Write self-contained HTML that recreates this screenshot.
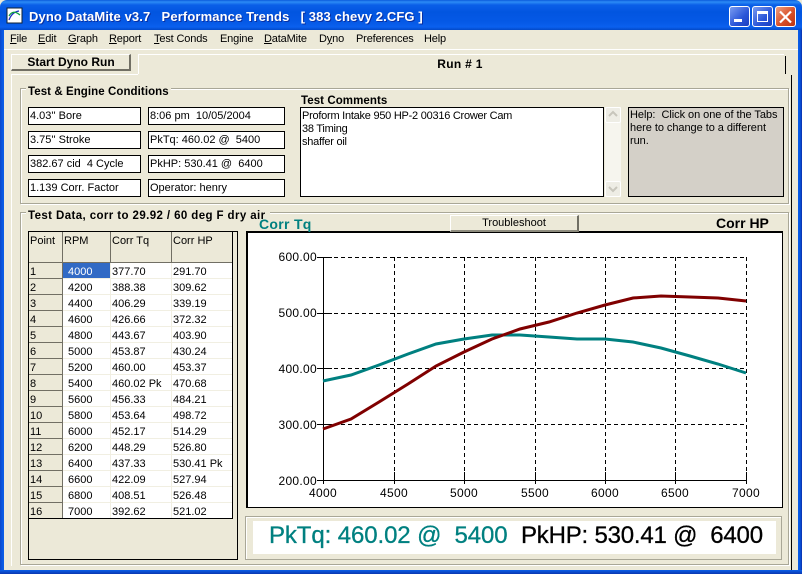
<!DOCTYPE html>
<html><head><meta charset="utf-8"><style>
html,body{margin:0;padding:0;background:#ECE9D8}
#w{position:relative;width:802px;height:574px;overflow:hidden;background:#ECE9D8;font-family:"Liberation Sans",sans-serif;font-size:11px;color:#000}
#w div{position:absolute;box-sizing:border-box;white-space:pre}
.t{line-height:14px}
.box{background:#fff;border:1px solid #000;padding:1px 0 0 1px;line-height:14px;font-size:11px}
.b{font-weight:bold;letter-spacing:.07px;line-height:14px;font-size:11.5px}
.m{top:32px;line-height:15px;font-size:11px;letter-spacing:-.15px}
u{text-decoration:underline}
.g{border:1px solid #A9A797;box-shadow:inset 1px 1px 0 #fff,1px 1px 0 #fff}
svg{position:absolute;left:0;top:0}
svg text{font-family:"Liberation Sans",sans-serif}
</style></head><body><div id="w">
<div style="left:0;top:0;width:802px;height:30px;background:linear-gradient(#0A5BDB 0,#2C8BF5 2px,#0A5FE8 5px,#0255E0 12px,#0559E6 22px,#0A60EE 27px,#0349C8 30px);border-radius:7px 7px 0 0"></div>
<div style="left:0;top:30px;width:4px;height:544px;background:linear-gradient(90deg,#0A46C8,#0855E0 50%,#0A5FE8)"></div>
<div style="left:798px;top:30px;width:4px;height:544px;background:linear-gradient(270deg,#0A2FA8,#0855E0 50%,#0A5FE8)"></div>
<div style="left:0;top:570px;width:802px;height:4px;background:linear-gradient(#0A5FE8,#0A37B0)"></div>
<svg width="802" height="574" style="z-index:1">
<rect x="7" y="8" width="15" height="15" fill="#fff"/><rect x="7" y="8" width="15" height="15" fill="none" stroke="#123" stroke-width="1"/>
<path d="M9 20Q12 12 19 11" fill="none" stroke="#2030c0" stroke-width="1.3"/><path d="M9 16Q13 9 20 15" fill="none" stroke="#10a040" stroke-width="1.3"/>
</svg>
<div class="t" style="left:29px;top:10px;font-weight:bold;color:#fff;font-size:13px;letter-spacing:.12px;text-shadow:1px 1px 0 #0A2FA0;z-index:2">Dyno DataMite v3.7   Performance Trends   [ 383 chevy 2.CFG ]</div>
<div style="left:729px;top:6px;width:21px;height:21px;border:1px solid #fff;border-radius:3px;background:linear-gradient(135deg,#7A9CF0,#2A55D8 60%,#1B3FC0)"></div>
<div style="left:734px;top:19px;width:8px;height:3px;background:#fff"></div>
<div style="left:752px;top:6px;width:21px;height:21px;border:1px solid #fff;border-radius:3px;background:linear-gradient(135deg,#7A9CF0,#2A55D8 60%,#1B3FC0)"></div>
<div style="left:757px;top:11px;width:11px;height:11px;border:1px solid #fff;border-top:3px solid #fff"></div>
<div style="left:775px;top:6px;width:21px;height:21px;border:1px solid #fff;border-radius:3px;background:linear-gradient(135deg,#EFA080,#D8502A 55%,#BC3410)"></div>
<svg width="802" height="574" style="z-index:2"><path d="M780 11.500L791 22.500M791 11.500L780 22.500" stroke="#fff" stroke-width="2.200"/></svg>

<div class="m" style="left:10px"><u>F</u>ile</div>
<div class="m" style="left:38px"><u>E</u>dit</div>
<div class="m" style="left:68px"><u>G</u>raph</div>
<div class="m" style="left:109px"><u>R</u>eport</div>
<div class="m" style="left:154px"><u>T</u>est Conds</div>
<div class="m" style="left:220px">Engine</div>
<div class="m" style="left:264px"><u>D</u>ataMite</div>
<div class="m" style="left:319px">D<u>y</u>no</div>
<div class="m" style="left:356px">Preferences</div>
<div class="m" style="left:424px">Help</div>
<div style="left:4px;top:49px;width:794px;height:1px;background:#fff"></div>

<div style="left:138px;top:54px;width:646px;height:1px;background:#fff"></div>
<div style="left:138px;top:54px;width:1px;height:20px;background:#fff"></div>
<div style="left:11px;top:74px;width:127px;height:1px;background:#fff"></div>
<div style="left:11px;top:74px;width:1px;height:492px;background:#fff"></div>
<div style="left:785px;top:56px;width:1px;height:18px;background:#000"></div>
<div style="left:791px;top:75px;width:1px;height:495px;background:#000"></div>
<div style="left:11px;top:54px;width:120px;height:17px;background:#ECE9D8;border-top:1px solid #fff;border-left:1px solid #fff;border-right:2px solid #716F64;border-bottom:2px solid #716F64"></div>
<div class="b" style="left:11px;top:55px;width:120px;text-align:center;font-size:12px;letter-spacing:0">Start Dyno Run</div>
<div class="b" style="left:360px;top:57px;width:200px;text-align:center;font-size:12px;letter-spacing:.3px">Run # 1</div>

<div class="g" style="left:20px;top:88px;width:769px;height:116px"></div>
<div class="b" style="left:26px;top:85px;background:#ECE9D8;padding:0 2px;height:15px">Test &amp; Engine Conditions</div>
<div class="box" style="left:28px;top:107px;width:113px;height:18px">4.03'' Bore</div>
<div class="box" style="left:28px;top:131px;width:113px;height:18px">3.75'' Stroke</div>
<div class="box" style="left:28px;top:155px;width:113px;height:18px">382.67 cid  4 Cycle</div>
<div class="box" style="left:28px;top:179px;width:113px;height:18px">1.139 Corr. Factor</div>
<div class="box" style="left:148px;top:107px;width:137px;height:18px">8:06 pm  10/05/2004</div>
<div class="box" style="left:148px;top:131px;width:137px;height:18px">PkTq: 460.02 @  5400</div>
<div class="box" style="left:148px;top:155px;width:137px;height:18px">PkHP: 530.41 @  6400</div>
<div class="box" style="left:148px;top:179px;width:137px;height:18px">Operator: henry</div>
<div class="b" style="left:301px;top:94px">Test Comments</div>
<div class="box" style="left:300px;top:107px;width:304px;height:90px;line-height:13px;padding:2px 0 0 1px;letter-spacing:-.25px">Proform Intake 950 HP-2 00316 Crower Cam
38 Timing
shaffer oil</div>
<div style="left:605px;top:107px;width:16px;height:90px;background:#F6F5EE"></div>
<div style="left:605px;top:107px;width:16px;height:16px;background:#EEEDE5;border:1px solid #fff;border-radius:2px"></div>
<div style="left:605px;top:181px;width:16px;height:16px;background:#EEEDE5;border:1px solid #fff;border-radius:2px"></div>
<svg width="802" height="574" style="z-index:2"><path d="M609 116l4-4 4 4M609 187l4 4 4-4" fill="none" stroke="#C8C6BC" stroke-width="2"/></svg>
<div class="box" style="left:628px;top:107px;width:156px;height:90px;background:#D4D0C8;padding:1px 0 0 1px;line-height:13px;letter-spacing:-.05px">Help:  Click on one of the Tabs
here to change to a different
run.</div>

<div class="g" style="left:20px;top:212px;width:769px;height:353px"></div>
<div class="b" style="left:26px;top:209px;background:#ECE9D8;padding:0 2px;height:15px;width:244px;overflow:hidden;letter-spacing:.4px">Test Data, corr to 29.92 / 60 deg F dry air</div>

<div style="left:28px;top:231px;width:210px;height:329px;border:1px solid #000"></div>
<div style="left:232px;top:232px;width:1px;height:287px;background:#000"></div>
<div style="left:62px;top:263px;width:170px;height:256px;background:#fff"></div>
<svg width="802" height="574" style="z-index:1">
<g fill="#F1EFE2"><rect x="62" y="278" width="170" height="1"/><rect x="62" y="294" width="170" height="1"/><rect x="62" y="310" width="170" height="1"/><rect x="62" y="326" width="170" height="1"/><rect x="62" y="342" width="170" height="1"/><rect x="62" y="358" width="170" height="1"/><rect x="62" y="374" width="170" height="1"/><rect x="62" y="390" width="170" height="1"/><rect x="62" y="406" width="170" height="1"/><rect x="62" y="422" width="170" height="1"/><rect x="62" y="438" width="170" height="1"/><rect x="62" y="454" width="170" height="1"/><rect x="62" y="470" width="170" height="1"/><rect x="62" y="486" width="170" height="1"/><rect x="62" y="502" width="170" height="1"/><rect x="110" y="263" width="1" height="255"/><rect x="171" y="263" width="1" height="255"/></g>
<g fill="#716F64"><rect x="29" y="262" width="203" height="1"/><rect x="29" y="278" width="33" height="1"/><rect x="29" y="294" width="33" height="1"/><rect x="29" y="310" width="33" height="1"/><rect x="29" y="326" width="33" height="1"/><rect x="29" y="342" width="33" height="1"/><rect x="29" y="358" width="33" height="1"/><rect x="29" y="374" width="33" height="1"/><rect x="29" y="390" width="33" height="1"/><rect x="29" y="406" width="33" height="1"/><rect x="29" y="422" width="33" height="1"/><rect x="29" y="438" width="33" height="1"/><rect x="29" y="454" width="33" height="1"/><rect x="29" y="470" width="33" height="1"/><rect x="29" y="486" width="33" height="1"/><rect x="29" y="502" width="33" height="1"/><rect x="62" y="232" width="1" height="286"/><rect x="110" y="232" width="1" height="31"/><rect x="171" y="232" width="1" height="31"/></g>
<rect x="29" y="518" width="203" height="1" fill="#000"/>
<rect x="63" y="263" width="47" height="15" fill="#316AC5"/>
<g font-size="11" fill="#000">
<text x="30" y="244">Point</text><text x="64" y="244">RPM</text><text x="112" y="244">Corr Tq</text><text x="173" y="244">Corr HP</text>
<text x="30" y="275">1</text><text x="68" y="275" fill="#fff">4000</text><text x="112" y="275">377.70</text><text x="173" y="275">291.70</text>
<text x="30" y="291">2</text><text x="68" y="291">4200</text><text x="112" y="291">388.38</text><text x="173" y="291">309.62</text>
<text x="30" y="307">3</text><text x="68" y="307">4400</text><text x="112" y="307">406.29</text><text x="173" y="307">339.19</text>
<text x="30" y="323">4</text><text x="68" y="323">4600</text><text x="112" y="323">426.66</text><text x="173" y="323">372.32</text>
<text x="30" y="339">5</text><text x="68" y="339">4800</text><text x="112" y="339">443.67</text><text x="173" y="339">403.90</text>
<text x="30" y="355">6</text><text x="68" y="355">5000</text><text x="112" y="355">453.87</text><text x="173" y="355">430.24</text>
<text x="30" y="371">7</text><text x="68" y="371">5200</text><text x="112" y="371">460.00</text><text x="173" y="371">453.37</text>
<text x="30" y="387">8</text><text x="68" y="387">5400</text><text x="112" y="387">460.02 Pk</text><text x="173" y="387">470.68</text>
<text x="30" y="403">9</text><text x="68" y="403">5600</text><text x="112" y="403">456.33</text><text x="173" y="403">484.21</text>
<text x="30" y="419">10</text><text x="68" y="419">5800</text><text x="112" y="419">453.64</text><text x="173" y="419">498.72</text>
<text x="30" y="435">11</text><text x="68" y="435">6000</text><text x="112" y="435">452.17</text><text x="173" y="435">514.29</text>
<text x="30" y="451">12</text><text x="68" y="451">6200</text><text x="112" y="451">448.29</text><text x="173" y="451">526.80</text>
<text x="30" y="467">13</text><text x="68" y="467">6400</text><text x="112" y="467">437.33</text><text x="173" y="467">530.41 Pk</text>
<text x="30" y="483">14</text><text x="68" y="483">6600</text><text x="112" y="483">422.09</text><text x="173" y="483">527.94</text>
<text x="30" y="499">15</text><text x="68" y="499">6800</text><text x="112" y="499">408.51</text><text x="173" y="499">526.48</text>
<text x="30" y="515">16</text><text x="68" y="515">7000</text><text x="112" y="515">392.62</text><text x="173" y="515">521.02</text>
</g></svg>

<div style="left:246px;top:231px;width:537px;height:277px;background:#fff;border:2px solid #000;border-right-width:1px;border-bottom-width:1px"></div>
<div style="left:450px;top:215px;width:129px;height:17px;background:#ECE9D8;border-top:1px solid #fff;border-left:1px solid #fff;border-right:2px solid #716F64;border-bottom:2px solid #8E8C7E;text-align:center;line-height:14px;font-size:11px;z-index:2">Troubleshoot</div>
<div style="left:259px;top:216px;color:#008080;font-weight:bold;font-size:14px;line-height:16px;letter-spacing:.3px;z-index:3">Corr Tq</div>
<div style="left:716px;top:215px;font-weight:bold;font-size:14px;line-height:16px;z-index:3">Corr HP</div>

<svg width="802" height="574" style="z-index:2">
<g stroke="#000" stroke-width="1" stroke-dasharray="4 3" fill="none">
<path d="M327 257.500H746M327 313.500H746M327 368.500H746M327 424.500H746"/>
<path d="M394.500 257V478M464.500 257V478M535.500 257V478M605.500 257V478M675.500 257V478M746.500 257V478"/>
</g>
<g stroke="#000" stroke-width="1" fill="none">
<path d="M323.500 257V480.500H747"/>
<path d="M317 257.500H332M317 313.500H332M317 368.500H332M317 424.500H332M317 480.500H323"/>
<path d="M394.500 472V484M464.500 472V484M535.500 472V484M605.500 472V484M675.500 472V484M746.500 472V484M323.500 480V484"/>
</g>
<polyline fill="none" stroke="#008080" stroke-width="3" points="323,381 351,375 379,365 408,354 436,344 464,339 492,335 520,335 549,337 577,339 605,339 633,342 661,348 690,356 718,364 746,373"/>
<polyline fill="none" stroke="#800000" stroke-width="3" points="323,429 351,419 379,402 408,384 436,366 464,352 492,339 520,329 549,322 577,313 605,305 633,298 661,296 690,297 718,298 746,301"/>
<g font-size="12" fill="#000" text-anchor="end" letter-spacing=".3">
<text x="317" y="261">600.00</text><text x="317" y="317">500.00</text><text x="317" y="373">400.00</text><text x="317" y="429">300.00</text><text x="317" y="485">200.00</text>
</g>
<g font-size="12" fill="#000" text-anchor="middle" letter-spacing=".3">
<text x="323" y="497">4000</text><text x="394" y="497">4500</text><text x="464" y="497">5000</text><text x="535" y="497">5500</text><text x="605" y="497">6000</text><text x="675" y="497">6500</text><text x="746" y="497">7000</text>
</g></svg>

<div style="left:245px;top:516px;width:537px;height:44px;border:1px solid #A9A797;box-shadow:inset 1px 1px 0 #fff"></div>
<div style="left:253px;top:521px;width:523px;height:33px;background:#fff"></div>
<div style="left:269px;top:522px;font-size:24px;line-height:28px;color:#008080;letter-spacing:-.1px;-webkit-text-stroke:.3px #008080;z-index:2">PkTq: 460.02 @  5400</div>
<div style="left:521px;top:522px;font-size:24px;line-height:28px;color:#000;letter-spacing:-.2px;-webkit-text-stroke:.3px #000;z-index:2">PkHP: 530.41 @  6400</div>
</div></body></html>
